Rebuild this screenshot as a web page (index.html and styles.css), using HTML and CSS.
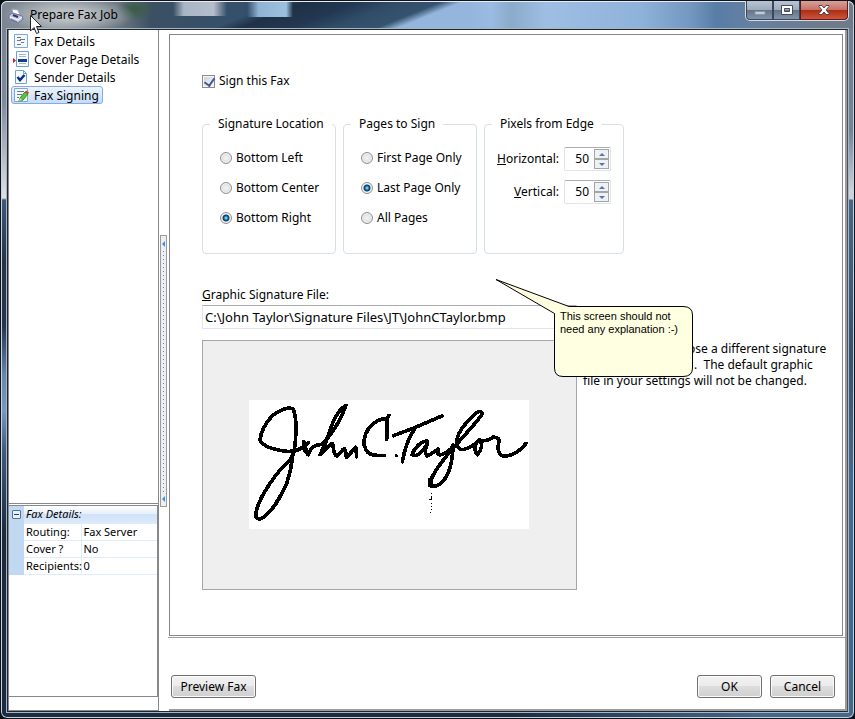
FILE: index.html
```html
<!DOCTYPE html>
<html lang="en">
<head>
<meta charset="utf-8">
<title>Prepare Fax Job</title>
<link rel="stylesheet" href="styles.css">
</head>
<body>
<div class="window">
  <header class="titlebar">
    <svg class="app-icon" width="16" height="16" viewBox="0 0 16 16" aria-hidden="true">
      <path d="M4 1l6 1 2 5-7-1z" fill="#fff" stroke="#9aa0c8"/>
      <path d="M1 7l4-2 9 3 1 3-5 4-9-4z" fill="#c3c8e4" stroke="#6d73a4"/>
      <path d="M2 9l8 3 4-3" fill="none" stroke="#fff"/>
      <path d="M5 7l5 2" stroke="#30385e" stroke-width="2"/>
      <path d="M3 11l6 3" stroke="#6a70a8"/>
    </svg>
    <h1 class="title">Prepare Fax Job</h1>
    <div class="controls">
      <button class="ctl ctl-min" aria-label="Minimize"><svg width="12" height="12" viewBox="0 0 12 12"><path d="M1 7.500h10v3H1z" fill="#c3ccd6" stroke="#8796a6"/></svg></button>
      <button class="ctl ctl-max" aria-label="Maximize"><svg width="12" height="12" viewBox="0 0 12 12"><path d="M.5 1.500h11v9H.5zM3.500 4.500h5v3h-5z" fill="#fff" fill-rule="evenodd" stroke="#454c5c"/></svg></button>
      <button class="ctl ctl-close" aria-label="Close"><svg width="12" height="12" viewBox="0 0 12 12"><path d="M1 1.500h3L6 4l2-2.500h3v1L8 6l3 3.500v1H8L6 8l-2 2.500H1v-1L4 6 1 2.500z" fill="#fff" stroke="#55434c"/></svg></button>
    </div>
  </header>

  <div class="client">
    <aside class="sidebar">
      <nav class="pages">
        <a class="page-link" href="#details">
          <svg width="16" height="16" viewBox="0 0 16 16"><path d="M1.500 1.500h13v13h-13z" fill="#f3f8fe" stroke="#7fa8d4"/><path d="M4 4.500h4M4 7.500h4M4 11.500h4M7 6.500h5M8 9.500h3" stroke="#66788c"/></svg>
          <span>Fax Details</span></a>
        <a class="page-link" href="#cover">
          <svg width="16" height="16" viewBox="0 0 16 16"><path d="M3.500.5h12v15h-12z" fill="#f6faff" stroke="#6fa2d4"/><path d="M6 3.500h7M6 5.500h7M6 12.500h7" stroke="#aab6c4"/><path d="M5 8h9v3H5z" fill="#123d94"/><path d="M0 7l3 2.500L0 12z" fill="#d01818"/></svg>
          <span>Cover Page Details</span></a>
        <a class="page-link" href="#sender">
          <svg width="16" height="16" viewBox="0 0 16 16"><path d="M2.500 1.500h8l3 3v10h-11z" fill="#f6faff" stroke="#6fa2d4"/><path d="M10.500 1.500v3h3" fill="none" stroke="#6fa2d4"/><path d="M4.500 8l2.500 3 4.500-5" fill="none" stroke="#0c2f8c" stroke-width="2.500"/></svg>
          <span>Sender Details</span></a>
        <a class="page-link selected" href="#signing" aria-current="page">
          <svg width="16" height="16" viewBox="0 0 16 16"><path d="M1.500 1.500h13v13h-13z" fill="#f3f8fe" stroke="#7fa8d4"/><path d="M4 4.500h7M4 7.500h5M4 10.500h2" stroke="#66788c"/><path d="M7 11l5-6 3 2-5 6-4 1z" fill="#58c93e" stroke="#2f8b28"/><path d="M12 5l1-1.500 3 2L15 7z" fill="#e8342c"/><path d="M6 14l1-3 2 2z" fill="#f6e4a8"/></svg>
          <span>Fax Signing</span></a>
      </nav>
      <section class="props">
        <table>
          <colgroup><col class="col-gutter"><col class="col-name"><col></colgroup>
          <thead><tr><th class="gutter"><button class="toggle" aria-label="Collapse"></button></th><th class="caption" colspan="2">Fax Details:</th></tr></thead>
          <tbody>
            <tr><td class="gutter"></td><th>Routing:</th><td>Fax Server</td></tr>
            <tr><td class="gutter"></td><th>Cover ?</th><td>No</td></tr>
            <tr><td class="gutter"></td><th>Recipients:</th><td>0</td></tr>
          </tbody>
        </table>
      </section>
    </aside>

    <div class="splitter"><button class="grip" aria-label="Collapse sidebar"><span class="arrow"></span><span class="dots"></span><span class="arrow"></span></button></div>

    <main class="main">
      <section class="panel">
        <label class="check"><input type="checkbox" checked>Sign this Fax</label>

        <div class="groups">
          <fieldset class="group">
            <legend>Signature Location</legend>
            <label class="radio"><input type="radio" name="location">Bottom Left</label>
            <label class="radio"><input type="radio" name="location">Bottom Center</label>
            <label class="radio"><input type="radio" name="location" checked>Bottom Right</label>
          </fieldset>
          <fieldset class="group">
            <legend>Pages to Sign</legend>
            <label class="radio"><input type="radio" name="pages">First Page Only</label>
            <label class="radio"><input type="radio" name="pages" checked>Last Page Only</label>
            <label class="radio"><input type="radio" name="pages">All Pages</label>
          </fieldset>
          <fieldset class="group group-edge">
            <legend>Pixels from Edge</legend>
            <div class="spin-row"><label for="horizontal"><u>H</u>orizontal:</label>
              <span class="spin"><input id="horizontal" type="text" value="50"><span class="steps"><button class="up" aria-label="Increase horizontal"></button><button class="down" aria-label="Decrease horizontal"></button></span></span></div>
            <div class="spin-row"><label for="vertical"><u>V</u>ertical:</label>
              <span class="spin"><input id="vertical" type="text" value="50"><span class="steps"><button class="up" aria-label="Increase vertical"></button><button class="down" aria-label="Decrease vertical"></button></span></span></div>
          </fieldset>
        </div>

        <div class="file">
          <label for="file"><u>G</u>raphic Signature File:</label>
          <input id="file" type="text" value="C:\John Taylor\Signature Files\JT\JohnCTaylor.bmp">
        </div>

        <div class="preview-row">
          <div class="preview">
            <svg class="signature" width="280" height="129" viewBox="27 30 840 387" role="img" aria-label="Signature">
              <g fill="none" stroke="#000" stroke-width="11" stroke-linejoin="round" stroke-linecap="round" shape-rendering="crispEdges">
                <path d="M163 180C167 150 172 90 160 58C145 48 118 60 96 78C78 98 63 120 60 150C70 170 105 180 140 184C165 186 180 180 205 158"/>
                <path d="M163 182C158 200 150 212 138 222C115 242 88 282 70 312C55 340 45 365 48 380C54 392 66 386 78 376C108 350 126 310 140 280C150 250 156 225 158 190"/>
                <path d="M190 155L203 192M196 160L192 178L205 194C212 170 225 165 245 163C275 135 302 90 318 46M312 50C290 65 275 100 262 145C255 165 247 180 240 194C255 178 268 165 276 160C284 170 276 192 290 198C300 195 305 178 313 176C320 185 316 195 320 202C333 190 340 176 347 172C350 180 348 190 350 200"/>
                <path d="M447 76L440 88M440 148L442 90C425 80 400 98 386 115C370 140 367 160 378 180C388 197 405 197 433 196"/>
                <path d="M468 197h2" stroke-width="8"/>
                <path d="M460 137L517 116L606 78M524 116C508 140 495 170 487 215"/>
                <path d="M562 154C545 150 522 175 516 194C530 204 550 185 562 160C555 180 552 190 562 198C575 192 585 182 595 177C597 184 588 193 600 195C620 190 632 182 640 165C637 200 635 240 612 270C595 290 575 295 570 280C575 250 610 210 630 185C655 155 700 110 727 72C723 60 714 62 703 75C680 95 655 125 650 150C648 170 658 182 672 178C690 174 704 165 716 150C704 164 700 182 712 194C726 180 728 162 720 150C732 155 750 150 758 142C775 140 780 148 776 160C772 176 775 195 790 198C815 200 845 180 858 160"/>
                <path d="M571 270V286" stroke-width="14"/>
              </g>
              <g fill="none" stroke="#000" stroke-width="3" shape-rendering="crispEdges"><path d="M573 309h3M573 318v10M567 327h9M573 339h3M573 348h3M573 357h3M570 367h3"/></g>
            </svg>
          </div>
          <p class="hint"><span class="line line-first">ose a different signature</span><span class="line line-second">.&nbsp; The default graphic</span><span class="line">file in your settings will not be changed.</span></p>
          <div class="callout">
            <svg width="199" height="100" viewBox="0 0 199 100" aria-hidden="true"><path d="M1 .5L74 27.500H188Q197.500 27.500 197.500 36V89Q197.500 97.500 188 97.500H68Q59.500 97.500 59.500 89V34.500Z" fill="#ffffe1" stroke="#000" stroke-linejoin="round"/></svg>
            <p>This screen should not<br>need any explanation :-)</p>
          </div>
        </div>
      </section>

      <footer class="actions">
        <button class="btn btn-wide">Preview Fax</button>
        <span class="spacer"></span>
        <button class="btn">OK</button>
        <button class="btn">Cancel</button>
      </footer>
    </main>
  </div>
  <svg class="cursor" width="12" height="20" viewBox="0 0 12 20" aria-hidden="true"><path d="M.5.5V16L4 12.500L6.500 18.500L9 17.500L6.500 11.500H11.500Z" fill="#fff" stroke="#222"/></svg>
</div>
</body>
</html>
```
FILE: styles.css
```css
* { box-sizing: border-box; }

body {
  margin: 0;
  background: #0b0e14;
  color: #000;
  font: 12px/16px "Noto Sans", "DejaVu Sans Condensed", sans-serif;
}

button, input { font: inherit; color: inherit; margin: 0; padding: 0; }
p, h1 { margin: 0; font: inherit; }

.window {
  position: relative;
  display: flex;
  flex-direction: column;
  min-height: 100vh;
  padding: 0 6px 6px;
  border: 1px solid #10131c;
  border-radius: 7px;
  background:
    linear-gradient(90deg, transparent 60%, #44688c 90%) bottom / 100% 8px no-repeat,
    linear-gradient(#1b2c40, #1b2c40) bottom / 100% 8px no-repeat,
    linear-gradient(#737f90 30px, #73859a 130px, #cbd3dc 190px, #cbd3dc 198px, #44678a 199px, #3d5c7e 290px, #36526f 350px, #456a90 480px, #44688c) right / 50% 100% no-repeat,
    linear-gradient(#7b858f 30px, #7f8a9a 100px, #e0e1e5 197px, #40597a 199px, #253549 260px, #25364c 325px, #6688b0 375px, #7698c2 410px, #3f5c7c 450px, #1b2c40 530px) left / 50% 100% no-repeat;
  box-shadow: inset 0 0 0 1px #c4d2e0;
}

.titlebar {
  display: flex;
  align-items: flex-start;
  height: 28px;
  margin: 0 -6px;
  padding: 0 5px 0 7px;
  border-radius: 6px 6px 0 0;
  box-shadow: inset 0 1px #e8eef5, inset 1px 0 #c4d2e0, inset -1px 0 #c4d2e0;
  background:
    radial-gradient(ellipse 66px 18px at 68px 14px, #b9bec3 30%, transparent),
    radial-gradient(ellipse 20px 12px at 134px 8px, #3d5d4c 20%, transparent),
    linear-gradient(90deg, transparent, #a9b5c5 20%, #b4becb 75%, transparent) 172px 0 / 54px 15px no-repeat,
    linear-gradient(90deg, transparent, #8fb3d2 25%, #9cc1de 85%, transparent) 246px 0 / 46px 16px no-repeat,
    linear-gradient(158deg, transparent 52%, #1f3146 57%, #223750 66%, #304d68 74%, #35536f 82%, #94b6dc 86%) left / 470px 100% no-repeat,
    linear-gradient(90deg, #7c8690, #8c959d 50px, #6a7681 120px, #3b5063 150px, #34506b 240px, #2a4059 300px, #2a4059 380px, #94b6dc 470px, #9abce2 490px, #8aabc9 510px, #9ebfe3 545px, #8fb2da 640px, #7397c0 690px, #587da7 715px, #6580a0 750px, #6f7b88 830px);
}

.app-icon { margin: 7px 6px 0 0; }
.title { flex: 1; margin-top: 6px; }

.controls {
  display: flex;
  height: 20px;
  border: 1px solid #d2dbe6;
  border-top: 0;
  border-radius: 0 0 5px 5px;
  overflow: hidden;
}
.ctl {
  display: flex;
  align-items: center;
  justify-content: center;
  width: 27px;
  border: 1px solid #3b4758;
  border-top: 0;
  background: linear-gradient(#b7c4d3, #9dabbc 48%, #637488 50%, #8194aa);
}
.ctl-min { border-radius: 0 0 0 4px; }
.ctl-close {
  width: 48px;
  border-color: #5c1c1c;
  border-radius: 0 0 4px 0;
  background: linear-gradient(#d8a198, #c77264 48%, #a92c16 50%, #d0533a);
}

.client {
  flex: 1;
  display: grid;
  grid-template-columns: 151px 10px 1fr;
  border: 1px solid #20262e;
  border-right-color: #4a5158;
  background: #fff;
  box-shadow: 0 0 0 1px #a7b5c4;
}

.sidebar {
  display: flex;
  flex-direction: column;
  border: 1px solid #85898e;
  border-top: 0;
}
.pages {
  flex: 1;
  display: flex;
  flex-direction: column;
  align-items: flex-start;
  padding: 2px;
  border-bottom: 1px solid #85898e;
}
.page-link {
  display: flex;
  align-items: center;
  gap: 5px;
  height: 18px;
  padding: 0 3px 0 1px;
  border: 1px solid transparent;
  color: inherit;
  line-height: 18px;
  text-decoration: none;
}
.page-link.selected {
  border-color: #84acdd;
  border-radius: 3px;
  background: linear-gradient(#ecf4fd, #c5dcf7);
}
.page-link span { padding-top: 1px; }

.props {
  height: 192px;
  margin: 1px 0 13px;
  border: 1px solid #85898e;
  border-left: 0;
  font-size: 11px;
  line-height: 16px;
}
.props table { width: 100%; border-collapse: collapse; table-layout: fixed; }
.col-gutter { width: 15px; }
.col-name { width: 57px; }
.props th, .props td {
  height: 17px;
  padding: 0 0 0 2px;
  border-bottom: 1px solid #dfecfb;
  text-align: left;
  font-weight: normal;
  white-space: nowrap;
}
.props tbody th { border-right: 1px solid #dfecfb; }
.props thead th { background: linear-gradient(#fff, #e6f0fb 45%, #cfe2f7 50%, #dceafa); }
.props .caption { font-style: italic; }
.props .gutter { padding: 0; border-color: #c0d8f0; background: #c0d8f0; }
.toggle {
  display: block;
  width: 9px;
  height: 9px;
  margin-left: 3px;
  border: 1px solid #54709c;
  border-radius: 1px;
  background: linear-gradient(#23406e, #23406e) center / 5px 1px no-repeat, #e8f0fa;
}

.splitter { display: flex; align-items: center; padding: 0 2px 0 1px; }
.grip {
  display: flex;
  flex-direction: column;
  align-items: center;
  justify-content: space-between;
  width: 7px;
  height: 272px;
  padding: 5px 0 4px;
  border: 1px solid #9b9b9b;
  background: #efefef;
}
.arrow { border: 3px solid transparent; border-left: 0; border-right-color: #3592f0; }
.dots { flex: 1; width: 1px; margin: 4px 0; background: repeating-linear-gradient(#3592f0 0 1px, transparent 1px 4px); }

.main {
  display: flex;
  flex-direction: column;
  min-width: 0;
  border-right: 2px solid #9b9b9b;
  border-bottom: 2px solid #9b9b9b;
}
.panel {
  flex: 1;
  margin: 4px 2px 1px 0;
  padding: 38px 13px 20px 32px;
  border: 1px solid #85858f;
}

.check { display: flex; align-items: center; gap: 4px; width: max-content; }
.check input {
  appearance: none;
  width: 13px;
  height: 13px;
  border: 1px solid #8a8d90;
  background: linear-gradient(135deg, #c9cfd6, #fff);
  box-shadow: inset 0 0 0 1px #f6f6f6;
}
.check input:checked::before {
  content: "";
  display: block;
  width: 5px;
  height: 8px;
  margin: 0 0 0 3px;
  border: solid #40579b;
  border-width: 0 2px 2px 0;
  transform: rotate(35deg);
}

.groups { display: flex; gap: 7px; margin-top: 27px; }
.group {
  flex: none;
  width: 134px;
  height: 138px;
  margin: 0;
  padding: 18px 0 0 17px;
  border: 1px solid #d5dfe5;
  border-radius: 4px;
}
.group legend { margin-left: -10px; padding: 0 8px; white-space: nowrap; }
.radio { display: flex; align-items: center; gap: 4px; margin-bottom: 14px; white-space: nowrap; }
.radio input {
  appearance: none;
  width: 12px;
  height: 12px;
  border: 1px solid #8e8f8f;
  border-radius: 50%;
  background: radial-gradient(#f4f4f4, #cfd3d7);
  box-shadow: inset 0 0 0 1px #f4f4f4;
}
.radio input:checked { background: radial-gradient(circle at 5px 5px, #62c8f0 0 1px, #13608f 2px, #0d3a5c 3px, #e8edf0 4px); }

.group-edge { width: 140px; padding: 15px 12px 0 0; }
.group-edge legend { margin-left: 7px; }
.spin-row { display: flex; align-items: center; justify-content: flex-end; gap: 5px; margin-bottom: 9px; }
.spin {
  display: flex;
  width: 47px;
  height: 24px;
  padding: 1px;
  border: 1px solid #dfe3ec;
  border-top-color: #abadb3;
  border-radius: 2px;
}
.spin input { flex: 1; min-width: 0; padding-right: 5px; border: 0; background: none; text-align: right; }
.steps { display: flex; flex-direction: column; width: 15px; }
.steps button {
  flex: 1;
  display: flex;
  align-items: center;
  justify-content: center;
  border: 1px solid #a3a5a8;
  background: #f0f1f3;
}
.steps button::before { content: ""; border: 3px solid transparent; }
.steps .up::before { border-top: 0; border-bottom-color: #5472b8; }
.steps .down::before { border-bottom: 0; border-top-color: #5472b8; }

.file { width: 375px; margin-top: 33px; }
.file label, .file input { display: block; }
.file input {
  width: 100%;
  height: 24px;
  margin-top: 2px;
  padding: 0 2px;
  border: 1px solid #e2e5ee;
  border-top-color: #abadb3;
  background: #fff;
  font-size: 13px;
}

.preview-row { position: relative; display: flex; gap: 6px; margin-top: 11px; }
.preview {
  flex: none;
  display: flex;
  align-items: center;
  justify-content: center;
  width: 375px;
  height: 250px;
  padding: 0 2px 2px 0;
  border: 1px solid #a5a6aa;
  background: #efefef;
}
.signature { background: #fff; }
.hint { padding-top: 1px; white-space: nowrap; }
.line { display: block; }
.line-first { padding-left: 105px; }
.line-second { padding-left: 111px; }

.callout {
  position: absolute;
  left: 293px;
  top: -61px;
  font-size: 11px;
  line-height: 13px;
}
.callout svg { display: block; }
.callout p { position: absolute; left: 65px; top: 31px; white-space: nowrap; font-family: "Liberation Sans", sans-serif; }

.actions {
  display: flex;
  gap: 8px;
  margin-left: -1px;
  padding: 37px 10px 11px 3px;
  border-top: 1px solid #9b9b9b;
}
.spacer { flex: 1; }
.btn {
  width: 65px;
  height: 23px;
  border: 1px solid #707070;
  border-radius: 3px;
  background: linear-gradient(#f2f2f2, #ebebeb 48%, #dddddd 50%, #cfcfcf);
  box-shadow: inset 0 0 0 1px #fbfbfb;
}
.btn-wide { width: 85px; }

.cursor { position: absolute; left: 29px; top: 14px; }
```
